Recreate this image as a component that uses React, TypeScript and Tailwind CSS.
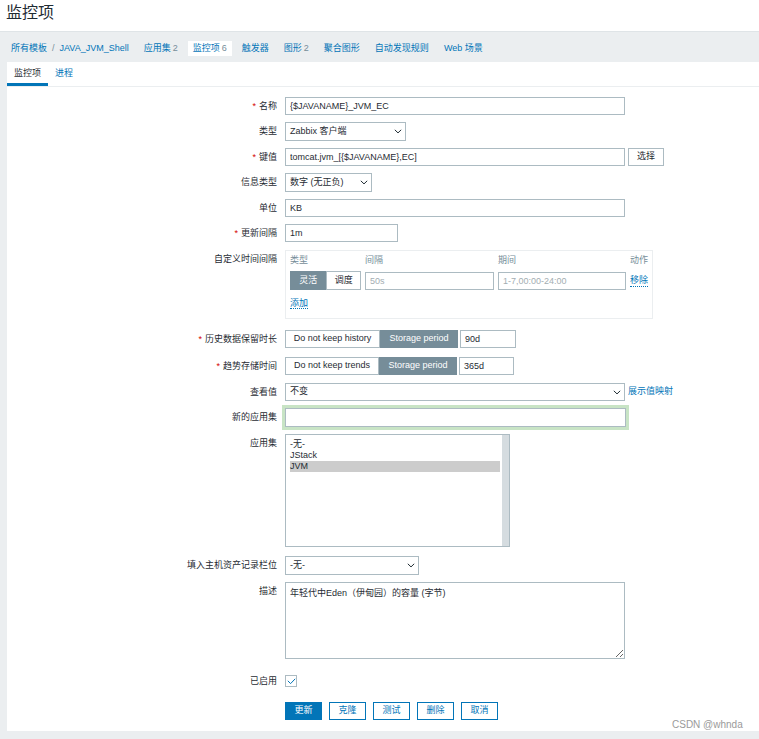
import React from "react";

const font = '"Liberation Sans", Arial, "Noto Sans CJK SC", sans-serif';

const crumbs = [
  { label: "应用集", count: "2" },
  { label: "监控项", count: "6", active: true },
  { label: "触发器" },
  { label: "图形", count: "2" },
  { label: "聚合图形" },
  { label: "自动发现规则" },
  { label: "Web 场景" },
];

function Chevron() {
  return (
    <svg width="8" height="5" viewBox="0 0 8 5" className="shrink-0">
      <path d="M0.8 0.8 L4 3.9 L7.2 0.8" fill="none" stroke="#1f2c33" strokeWidth="1" />
    </svg>
  );
}

function Row({
  label,
  required,
  className,
  center,
  children,
}: {
  label: string;
  required?: boolean;
  className?: string;
  center?: boolean;
  children: React.ReactNode;
}) {
  return (
    <div className={`flex gap-[8px] ${center ? "items-center" : "items-start"} ${className ?? ""}`}>
      <div className="h-[18px] w-[270px] shrink-0 text-right leading-[18px] text-[#1f2c33]">
        {required && <span className="mr-[3px] text-[#d40000]">*</span>}
        {label}
      </div>
      <div className="flex items-center">{children}</div>
    </div>
  );
}

function TextBox({ value, className }: { value: string; className: string }) {
  return (
    <input
      readOnly
      value={value}
      className={`h-[18px] border border-[#acbbc2] bg-white px-[4px] text-[9px] text-[#1f2c33] outline-none ${className}`}
    />
  );
}

function Select({ value, className }: { value: string; className: string }) {
  return (
    <div
      className={`flex h-[19px] items-center justify-between border border-[#acbbc2] bg-white pl-[4px] pr-[3px] text-[#1f2c33] ${className}`}
    >
      <span>{value}</span>
      <Chevron />
    </div>
  );
}

function Toggle({ left, right, leftW, rightW }: { left: string; right: string; leftW: string; rightW: string }) {
  return (
    <div className="flex h-[18px]">
      <div className={`flex items-center justify-center border border-[#acbbc2] bg-white text-[#1f2c33] ${leftW}`}>
        {left}
      </div>
      <div className={`flex items-center justify-center border border-[#768d99] bg-[#768d99] text-white ${rightW}`}>
        {right}
      </div>
    </div>
  );
}

export default function App() {
  return (
    <div
      className="relative h-[739px] w-[759px] overflow-hidden bg-[#ebeef0] text-[9px]"
      style={{ fontFamily: font }}
    >
      {/* Title */}
      <div className="h-[32px] border-b border-[#dfe4e7] bg-white pl-[6px] pt-[5px]">
        <h1 className="text-[16px] leading-[16px] text-[#1f2c33]">监控项</h1>
      </div>

      {/* Breadcrumbs */}
      <div className="flex h-[30px] items-start gap-[5px] pl-[6px] pt-[9px]">
        <div className="flex h-[15px] items-center px-[5px] text-[#0275b8]">
          <span>所有模板</span>
          <span className="mx-[5px] text-[#768d99]">/</span>
          <span>JAVA_JVM_Shell</span>
        </div>
        {crumbs.map((c) => (
          <div
            key={c.label}
            className={`flex h-[15px] items-center px-[5px] text-[#0275b8] ${c.active ? "bg-white" : ""}`}
          >
            {c.label}
            {c.count && <span className="ml-[2px] text-[#768d99]">{c.count}</span>}
          </div>
        ))}
      </div>

      {/* Card */}
      <div className="ml-[7px] bg-white pb-[11px]">
        <div className="flex h-[25px] border-b border-[#ebeef0]">
          <div className="flex items-center border-b-[3px] border-[#0275b8] px-[7px] pt-[3px] text-[#1f2c33]">
            监控项
          </div>
          <div className="flex items-center px-[7px] text-[#0275b8]">进程</div>
        </div>

        <div className="flex flex-col pt-[10px]">
          <Row label="名称" required>
            <TextBox value="{$JAVANAME}_JVM_EC" className="w-[340px]" />
          </Row>

          <Row label="类型" className="mt-[7px]">
            <Select value="Zabbix 客户端" className="w-[121px]" />
          </Row>

          <Row label="键值" required className="mt-[7px]">
            <TextBox value="tomcat.jvm_[{$JAVANAME},EC]" className="w-[340px]" />
            <button className="ml-[3px] h-[18px] w-[36px] border border-[#acbbc2] bg-white text-[#1f2c33]">
              选择
            </button>
          </Row>

          <Row label="信息类型" className="mt-[7px]">
            <Select value="数字 (无正负)" className="w-[87px]" />
          </Row>

          <Row label="单位" className="mt-[7px]">
            <TextBox value="KB" className="w-[340px]" />
          </Row>

          <Row label="更新间隔" required className="mt-[7px]">
            <TextBox value="1m" className="w-[113px]" />
          </Row>

          <Row label="自定义时间间隔" className="mt-[8px]">
            <div className="h-[69px] w-[368px] border border-[#ebeef0] pl-[4px] pt-[4px]">
              <div className="grid grid-cols-[71px_129px_128px_auto] gap-x-[4px] text-[#768d99]">
                <div className="leading-[11px]">类型</div>
                <div className="leading-[11px]">间隔</div>
                <div className="leading-[11px]">期间</div>
                <div className="leading-[11px]">动作</div>
              </div>
              <div className="mt-[5px] grid grid-cols-[71px_129px_128px_auto] items-center gap-x-[4px]">
                <div className="flex h-[19px]">
                  <div className="flex w-[37px] items-center justify-center border border-[#768d99] bg-[#768d99] text-white">
                    灵活
                  </div>
                  <div className="flex w-[35px] items-center justify-center border border-[#acbbc2] bg-white text-[#1f2c33]">
                    调度
                  </div>
                </div>
                <TextBox value="50s" className="w-[129px] !text-[#a3adb2]" />
                <TextBox value="1-7,00:00-24:00" className="w-[128px] !text-[#a3adb2]" />
                <span className="w-fit border-b border-dotted border-[#0275b8] leading-[11px] text-[#0275b8]">
                  移除
                </span>
              </div>
              <div className="mt-[7px]">
                <span className="border-b border-dotted border-[#0275b8] leading-[11px] text-[#0275b8]">添加</span>
              </div>
            </div>
          </Row>

          <Row label="历史数据保留时长" required className="mt-[11px]">
            <Toggle left="Do not keep history" right="Storage period" leftW="w-[95px]" rightW="w-[78px]" />
            <TextBox value="90d" className="ml-[2px] w-[56px]" />
          </Row>

          <Row label="趋势存储时间" required className="mt-[9px]">
            <Toggle left="Do not keep trends" right="Storage period" leftW="w-[94px]" rightW="w-[78px]" />
            <TextBox value="365d" className="ml-[2px] w-[55px]" />
          </Row>

          <Row label="查看值" className="mt-[8px]">
            <Select value="不变" className="!h-[18px] w-[340px]" />
            <span className="ml-[3px] text-[#0275b8]">展示值映射</span>
          </Row>

          <Row label="新的应用集" className="mt-[7px]">
            <input
              readOnly
              value=""
              className="h-[19px] w-[341px] border border-[#acbbc2] bg-white outline-[3px] outline-solid outline-[#c8e4c5]"
            />
          </Row>

          <Row label="应用集" className="mt-[7px]">
            <div className="flex h-[113px] w-[225px] border border-[#acbbc2] bg-white">
              <div className="flex-1 pl-[4px] pr-[2px] pt-[4px] text-[#1f2c33]">
                <div className="h-[11px] leading-[11px]">-无-</div>
                <div className="h-[11px] leading-[11px]">JStack</div>
                <div className="h-[11px] bg-[#cccccc] leading-[11px]">JVM</div>
              </div>
              <div className="w-[7px] bg-[#d5dce0]" />
            </div>
          </Row>

          <Row label="填入主机资产记录栏位" className="mt-[9px]">
            <Select value="-无-" className="w-[134px]" />
          </Row>

          <Row label="描述" className="mt-[7px]">
            <textarea
              readOnly
              value="年轻代中Eden（伊甸园）的容量 (字节)"
              className="h-[77px] w-[340px] border border-[#acbbc2] bg-white px-[4px] py-[5px] text-[9px] leading-[11px] text-[#1f2c33] outline-none"
            />
          </Row>

          <Row label="已启用" center className="mt-[13px]">
            <div className="flex h-[12px] w-[12px] items-center justify-center border border-[#acbbc2] bg-white">
              <svg width="9" height="7" viewBox="0 0 9 7">
                <path d="M0.8 2.8 L3.6 5.6 L8.2 0.8" fill="none" stroke="#0275b8" strokeWidth="1" />
              </svg>
            </div>
          </Row>

          <div className="mt-[12px] flex gap-[7px] pl-[278px]">
            <button className="h-[18px] w-[37px] border border-[#0275b8] bg-[#0275b8] text-white">更新</button>
            <button className="h-[18px] w-[37px] border border-[#0275b8] bg-white text-[#0275b8]">克隆</button>
            <button className="h-[18px] w-[37px] border border-[#0275b8] bg-white text-[#0275b8]">测试</button>
            <button className="h-[18px] w-[37px] border border-[#0275b8] bg-white text-[#0275b8]">删除</button>
            <button className="h-[18px] w-[37px] border border-[#0275b8] bg-white text-[#0275b8]">取消</button>
          </div>
        </div>
      </div>

      {/* Watermark */}
      <div className="absolute left-[672px] top-[719px] text-[10px] leading-[12px] text-[#9a9a9a]">CSDN @whnda</div>
    </div>
  );
}
